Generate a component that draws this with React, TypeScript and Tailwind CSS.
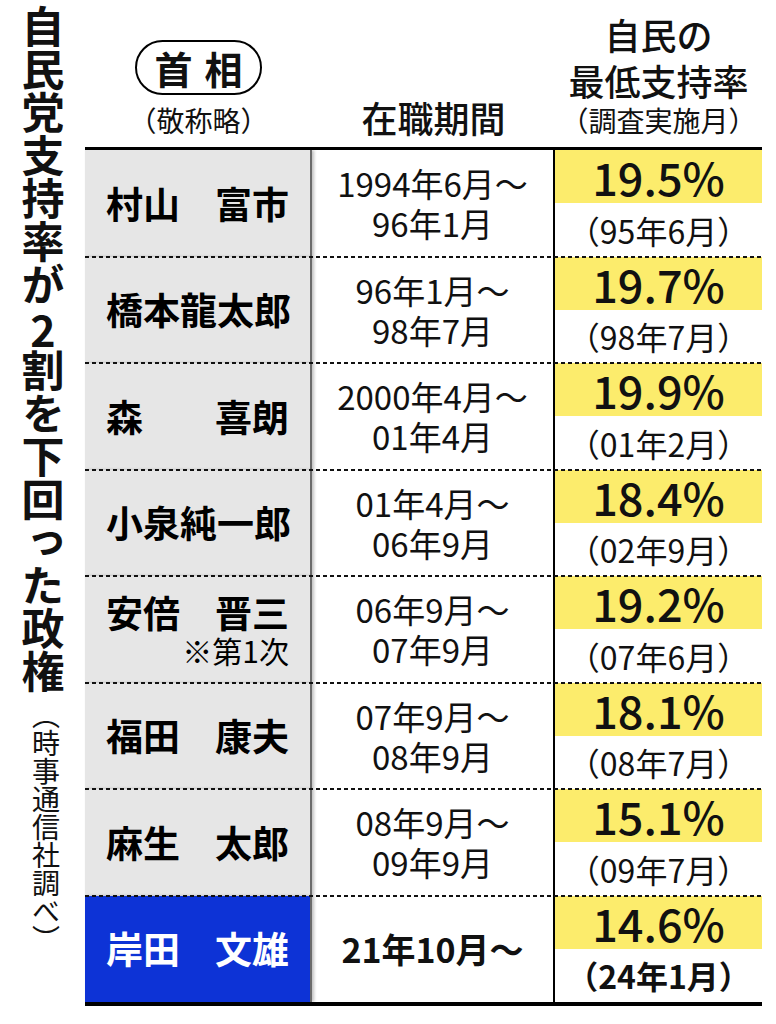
type Row = {
  name: string[];
  note?: string;
  from: string;
  to?: string;
  pct: string;
  month: string;
  current?: boolean;
};

const ROWS: Row[] = [
  { name: ['村山', '富市'], from: '1994年6月～', to: '96年1月', pct: '19.5%', month: '（95年6月）' },
  { name: ['橋本龍太郎'], from: '96年1月～', to: '98年7月', pct: '19.7%', month: '（98年7月）' },
  { name: ['森', '喜朗'], from: '2000年4月～', to: '01年4月', pct: '19.9%', month: '（01年2月）' },
  { name: ['小泉純一郎'], from: '01年4月～', to: '06年9月', pct: '18.4%', month: '（02年9月）' },
  { name: ['安倍', '晋三'], note: '※第1次', from: '06年9月～', to: '07年9月', pct: '19.2%', month: '（07年6月）' },
  { name: ['福田', '康夫'], from: '07年9月～', to: '08年9月', pct: '18.1%', month: '（08年7月）' },
  { name: ['麻生', '太郎'], from: '08年9月～', to: '09年9月', pct: '15.1%', month: '（09年7月）' },
  { name: ['岸田', '文雄'], from: '21年10月～', pct: '14.6%', month: '（24年1月）', current: true },
];

function NameCell({ row }: { row: Row }) {
  const bg = row.current ? 'bg-[#0d33d6] text-white' : 'bg-[#e6e6e6] text-black';
  return (
    <div className={`w-[227px] shrink-0 flex flex-col justify-center pl-[21px] pr-[21px] border-r-2 border-[#6b6b6b] shadow-[2px_0_3px_rgba(0,0,0,0.25)] ${bg}`}>
      <div className="flex justify-between whitespace-nowrap text-[37px] font-bold leading-none">
        {row.name.map((n) => (
          <span key={n}>{n}</span>
        ))}
      </div>
      {row.note && <div className="self-end mt-[4px] text-[30px] font-normal leading-none">{row.note}</div>}
    </div>
  );
}

export default function App() {
  return (
    <div className="flex w-[776px] h-[1024px] bg-white text-[#111] font-['Noto_Sans_CJK_JP',sans-serif]">
      {/* vertical title */}
      <div className="w-[85px] shrink-0 flex flex-col items-start pt-[5px]">
        <div className="ml-[21px] [writing-mode:vertical-rl] text-[43px] font-bold leading-none">
          自民党支持率が<span className="[text-combine-upright:all]">2</span>割を下回った政権
        </div>
        <div className="ml-[32px] mt-[8px] [writing-mode:vertical-rl] text-[28px] font-normal leading-none">
          （時事通信社調べ）
        </div>
      </div>

      <div className="w-[677px] shrink-0 flex flex-col">
        {/* header */}
        <div className="h-[147px] flex">
          <div className="w-[227px] flex flex-col items-center pt-[40px]">
            <div className="w-[127px] h-[55px] rounded-full border-[2.5px] border-black flex items-center justify-center gap-[12px] text-[38px] font-bold leading-none">
              <span>首</span>
              <span>相</span>
            </div>
            <div className="mt-[11px] text-[28px] font-normal leading-none">（敬称略）</div>
          </div>
          <div className="w-[243px] flex justify-center pt-[99px] text-[36px] font-medium leading-none">在職期間</div>
          <div className="flex-1 flex flex-col items-center pt-[11px]">
            <div className="text-[36px] font-medium leading-[46px] text-center">
              自民の
              <br />
              最低支持率
            </div>
            <div className="mt-[3px] text-[28px] font-normal leading-none">（調査実施月）</div>
          </div>
        </div>

        <div className="h-[3px] bg-black" />

        {/* rows */}
        <div className="h-[852px] flex flex-col">
          {ROWS.map((row, i) => (
            <div key={row.pct + i} className="relative flex-1 flex">
              {i > 0 && (
                <div className="absolute left-0 right-0 top-[-1px] h-[2px] z-10 bg-[repeating-linear-gradient(to_right,#111_0_4px,transparent_4px_7px)]" />
              )}
              <NameCell row={row} />
              <div
                className={`w-[243px] shrink-0 border-r-2 border-black flex flex-col items-center justify-center leading-[40px] whitespace-nowrap ${
                  row.current ? 'font-bold text-[34px]' : 'font-normal text-[33px]'
                }`}
              >
                <div>{row.from}</div>
                {row.to && <div>{row.to}</div>}
              </div>
              <div className="flex-1 flex flex-col">
                <div className="flex-1 bg-[#fcec6c] flex items-center justify-center text-[45px] font-medium leading-none">
                  {row.pct}
                </div>
                <div className={`flex-1 flex items-center justify-center text-[32px] leading-none ${row.current ? 'font-bold' : 'font-normal'}`}>
                  {row.month}
                </div>
              </div>
            </div>
          ))}
        </div>

        <div className="h-[4px] bg-black" />
      </div>
    </div>
  );
}
